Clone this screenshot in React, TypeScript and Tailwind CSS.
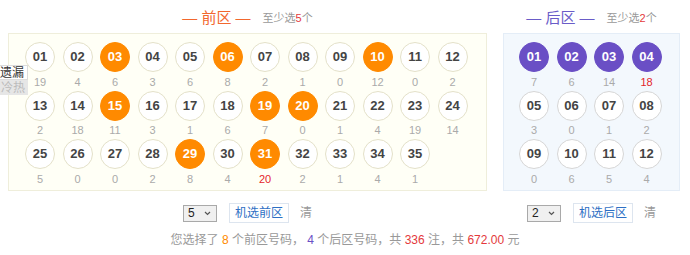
import React from "react";

type Ball = { n: string; miss: number; on?: boolean; hot?: boolean };

const front: Ball[] = [
  { n: "01", miss: 19 }, { n: "02", miss: 4 }, { n: "03", miss: 6, on: true },
  { n: "04", miss: 3 }, { n: "05", miss: 6 }, { n: "06", miss: 8, on: true },
  { n: "07", miss: 2 }, { n: "08", miss: 1 }, { n: "09", miss: 0 },
  { n: "10", miss: 12, on: true }, { n: "11", miss: 0 }, { n: "12", miss: 2 },
  { n: "13", miss: 2 }, { n: "14", miss: 18 }, { n: "15", miss: 11, on: true },
  { n: "16", miss: 3 }, { n: "17", miss: 1 }, { n: "18", miss: 6 },
  { n: "19", miss: 7, on: true }, { n: "20", miss: 0, on: true }, { n: "21", miss: 1 },
  { n: "22", miss: 4 }, { n: "23", miss: 19 }, { n: "24", miss: 14 },
  { n: "25", miss: 5 }, { n: "26", miss: 0 }, { n: "27", miss: 0 },
  { n: "28", miss: 2 }, { n: "29", miss: 8, on: true }, { n: "30", miss: 4 },
  { n: "31", miss: 20, on: true, hot: true }, { n: "32", miss: 2 }, { n: "33", miss: 1 },
  { n: "34", miss: 4 }, { n: "35", miss: 1 },
];

const back: Ball[] = [
  { n: "01", miss: 7, on: true }, { n: "02", miss: 6, on: true },
  { n: "03", miss: 14, on: true }, { n: "04", miss: 18, on: true, hot: true },
  { n: "05", miss: 3 }, { n: "06", miss: 0 }, { n: "07", miss: 1 }, { n: "08", miss: 2 },
  { n: "09", miss: 0 }, { n: "10", miss: 6 }, { n: "11", miss: 5 }, { n: "12", miss: 4 },
];

const BallCell = ({ b, kind }: { b: Ball; kind: "front" | "back" }) => {
  const ballCls = b.on
    ? kind === "front"
      ? "bg-[#ff8a00] text-white border-[#ff8a00]"
      : "bg-[#6a4fc5] text-white border-[#6a4fc5]"
    : kind === "front"
      ? "bg-white text-[#444] border-[#e4e1c9]"
      : "bg-white text-[#444] border-[#d6d6d6]";
  return (
    <div className="flex w-[30px] flex-col items-center">
      <div
        className={`flex h-[30px] w-[30px] items-center justify-center rounded-full border text-[13px] font-bold ${ballCls}`}
      >
        {b.n}
      </div>
      <div
        className={`flex h-[18.5px] items-center pt-[1px] text-[11px] ${
          b.hot ? "text-[#e4252b]" : "text-[#aaa]"
        }`}
      >
        {b.miss}
      </div>
    </div>
  );
};

const Heading = ({ title, need, color }: { title: string; need: number; color: string }) => (
  <div className="flex h-[33px] items-center justify-center pt-[4px]">
    <span className={`text-[15px] ${color}`}>— {title} —</span>
    <span className="ml-[12px] text-[11px] text-[#999]">
      至少选<span className="text-[#e4393c]">{need}</span>个
    </span>
  </div>
);

const Controls = ({ value, label }: { value: number; label: string }) => (
  <div className="mt-[11px] flex h-[22px] items-center justify-center">
    <div className="flex h-[17px] w-[34px] items-center justify-between border border-[#a9a9a9] bg-[#f0f0f0] pl-[4px] pr-[5px] text-[12px] text-[#222]">
      <span>{value}</span>
      <svg width="7" height="5" viewBox="0 0 7 5" fill="none">
        <path d="M1 1l2.5 2.5L6 1" stroke="#555" strokeWidth="1.2" />
      </svg>
    </div>
    <button className="ml-[12px] flex h-[20px] w-[60px] items-center justify-center border border-[#dde5ef] bg-white text-[12px] text-[#2d6fc4]">
      {label}
    </button>
    <span className="ml-[11px] text-[12px] text-[#999]">清</span>
  </div>
);

export default function App() {
  return (
    <div
      className="relative h-[255px] w-[690px] overflow-hidden bg-white"
      style={{ fontFamily: '"Liberation Sans", "Noto Sans CJK SC", sans-serif' }}
    >
      <div className="flex gap-[16px] pl-[8px]">
        <section className="w-[479px]">
          <Heading title="前区" need={5} color="text-[#f2672e]" />
          <div className="h-[158px] border border-[#efeedb] bg-[#fffff6] pl-[16px] pt-[8px]">
            <div className="grid grid-cols-[repeat(12,30px)] gap-x-[7.5px]">
              {front.map((b) => (
                <BallCell key={b.n} b={b} kind="front" />
              ))}
            </div>
          </div>
          <Controls value={5} label="机选前区" />
        </section>
        <section className="w-[177px]">
          <Heading title="后区" need={2} color="text-[#6a5cc8]" />
          <div className="h-[158px] border border-[#e4edf7] bg-[#f3f8fd] pl-[15px] pt-[8px]">
            <div className="grid grid-cols-[repeat(4,30px)] gap-x-[7.5px]">
              {back.map((b) => (
                <BallCell key={b.n} b={b} kind="back" />
              ))}
            </div>
          </div>
          <Controls value={2} label="机选后区" />
        </section>
      </div>

      <p className="mt-[8px] text-center text-[12px] leading-[16px] text-[#999]">
        您选择了 <span className="text-[#ff8a00]">8</span> 个前区号码，{" "}
        <span className="text-[#6a4fc5]">4</span> 个后区号码，共{" "}
        <span className="text-[#e4393c]">336</span> 注，共{" "}
        <span className="text-[#e4393c]">672.00</span> 元
      </p>

      {/* side tabs */}
      <div className="absolute left-0 top-[65px] w-[28px] text-[12px]">
        <div className="flex h-[15px] items-center justify-end border border-l-0 border-[#dcdcdc] bg-white pr-[3px] leading-none text-[#333]">
          遗漏
        </div>
        <div className="flex h-[15px] items-center justify-end bg-[#e6e6e6] pr-[3px] leading-none text-[#bbb]">
          冷热
        </div>
      </div>
    </div>
  );
}
